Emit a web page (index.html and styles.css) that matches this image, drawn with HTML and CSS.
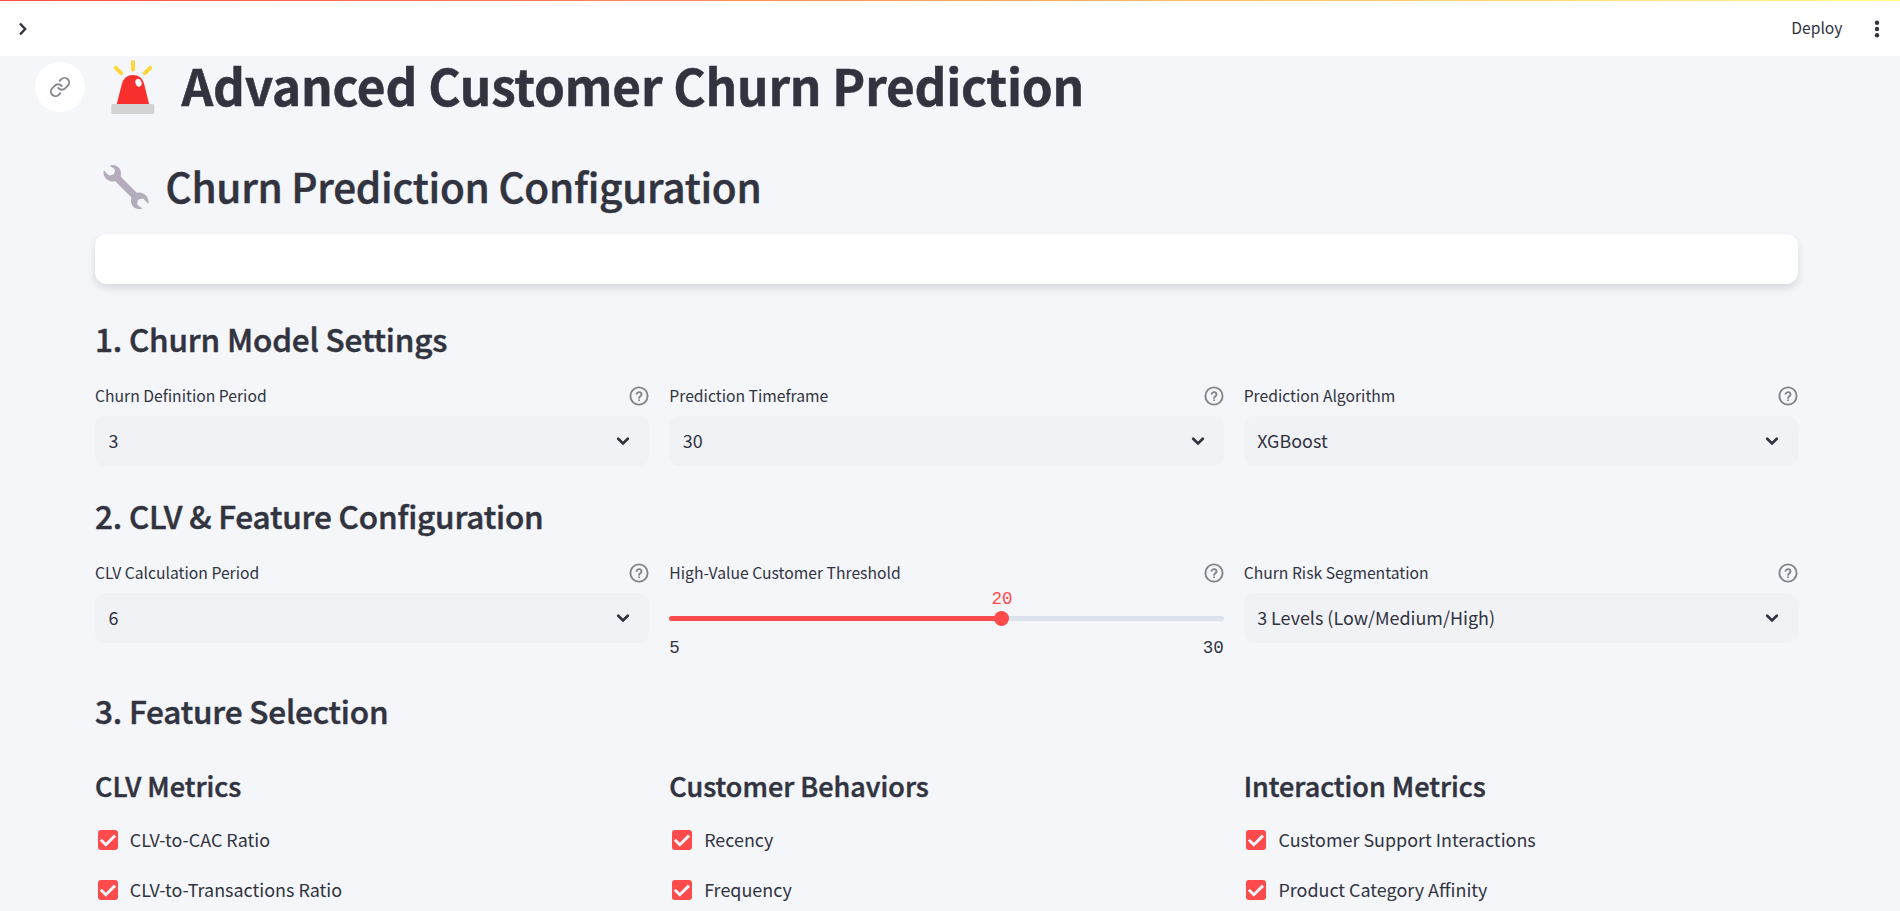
FILE: index.html
```html
<!DOCTYPE html>
<html lang="en">
<head>
<meta charset="utf-8">
<title>Advanced Customer Churn Prediction</title>
<link rel="stylesheet" href="styles.css">
</head>
<body>
<svg class="defs" width="0" height="0">
  <symbol id="help" viewBox="0 0 20 20"><g fill="none" stroke="currentColor" stroke-width="1.9" stroke-linecap="round" stroke-linejoin="round"><circle cx="10" cy="10" r="8.600"/><path d="M7.600 7.900a2.500 2.500 0 0 1 4.900.700c0 1.700-2.400 2.100-2.400 3.300"/><path d="M10.050 14.300h.01"/></g></symbol>
  <symbol id="down" viewBox="0 0 14 10"><path d="M2.200 2.700L7 7.400l4.800-4.700" fill="none" stroke="currentColor" stroke-width="2.700" stroke-linecap="round"/></symbol>
  <symbol id="check" viewBox="0 0 20 20"><path d="M2.800 9.800l5 4.900L17 5.600" fill="none" stroke="#f4f6fa" stroke-width="2.900"/></symbol>
</svg>
<header class="topbar">
  <svg class="expand" width="10" height="14" viewBox="0 0 10 14"><path d="M2 1.500L7.200 7 2 12.500" fill="none" stroke="currentColor" stroke-width="2.400"/></svg>
  <span class="deploy">Deploy</span>
  <svg class="menu" width="6" height="18" viewBox="0 0 6 18"><g fill="currentColor"><circle cx="3" cy="2.800" r="2.200"/><circle cx="3" cy="9" r="2.200"/><circle cx="3" cy="15.200" r="2.200"/></g></svg>
</header>
<main class="page">
  <h1 class="title">
    <a class="anchor"><svg width="22" height="22" viewBox="0 0 24 24" fill="none" stroke="currentColor" stroke-width="2" stroke-linecap="round" stroke-linejoin="round"><path d="M10 13a5 5 0 0 0 7.54.54l3-3a5 5 0 0 0-7.07-7.07l-1.72 1.71"/><path d="M14 11a5 5 0 0 0-7.54-.54l-3 3a5 5 0 0 0 7.07 7.07l1.71-1.71"/></svg></a>
    <svg class="siren" width="44" height="56" viewBox="0 0 44 56"><g stroke="#fdd73b" stroke-width="4" stroke-linecap="round"><path d="M22 3v7.500M4.800 8.800l5.400 5.400M39.200 8.800l-5.400 5.400"/></g><path d="M5.500 46L11 24.500Q13.500 16 22 16t11 8.500L38.300 46z" fill="#f8312f"/><ellipse cx="27.500" cy="23.800" rx="3" ry="4" transform="rotate(-18 27.500 23.800)" fill="#fff"/><rect x=".3" y="45" width="43" height="10" rx="1.800" fill="#d3d3d3"/></svg>
    <span class="title-text">Advanced Customer Churn Prediction</span>
  </h1>
  <h2 class="subtitle">
    <svg class="wrench" width="46" height="46" viewBox="0 0 46 46"><path d="M14 14l18 18" stroke="#b4acbc" stroke-width="7"/><g fill="#b4acbc"><path d="M6.500 1.600C11-.5 18.300 2.600 18 9.800c0 2-.6 3.500-1.700 4.800-2 2.300-5.500 3.700-9 2.400C2 15.500-.4 10.500.8 6.200l4.400 4.500q1 1 2.300.6l2.700-.8q.8-.3 1-1.100l.6-2.600q.3-1.200-.7-2z"/><path d="M39.500 44.400C35 46.500 27.700 43.400 28 36.200c0-2 .6-3.500 1.700-4.800 2-2.300 5.500-3.700 9-2.400 5.300 1.500 7.700 6.500 6.500 10.800l-4.400-4.500q-1-1-2.300-.6l-2.700.8q-.8.300-1 1.100l-.6 2.600q-.3 1.200.7 2z"/></g></svg>
    <span class="subtitle-text">Churn Prediction Configuration</span>
  </h2>
  <div class="card"></div>

  <h3 class="section">1. Churn Model Settings</h3>
  <div class="columns">
    <div class="field"><div class="label"><span>Churn Definition Period</span><svg class="help"><use href="#help"/></svg></div><div class="select"><span>3</span><svg class="down"><use href="#down"/></svg></div></div>
    <div class="field"><div class="label"><span>Prediction Timeframe</span><svg class="help"><use href="#help"/></svg></div><div class="select"><span>30</span><svg class="down"><use href="#down"/></svg></div></div>
    <div class="field"><div class="label"><span>Prediction Algorithm</span><svg class="help"><use href="#help"/></svg></div><div class="select"><span>XGBoost</span><svg class="down"><use href="#down"/></svg></div></div>
  </div>

  <h3 class="section second">2. CLV &amp; Feature Configuration</h3>
  <div class="columns">
    <div class="field"><div class="label"><span>CLV Calculation Period</span><svg class="help"><use href="#help"/></svg></div><div class="select"><span>6</span><svg class="down"><use href="#down"/></svg></div></div>
    <div class="field"><div class="label"><span>High-Value Customer Threshold</span><svg class="help"><use href="#help"/></svg></div>
      <div class="slider">
        <div class="track"><div class="thumb"><span class="value">20</span></div></div>
        <div class="ticks"><span>5</span><span>30</span></div>
      </div>
    </div>
    <div class="field"><div class="label"><span>Churn Risk Segmentation</span><svg class="help"><use href="#help"/></svg></div><div class="select"><span>3 Levels (Low/Medium/High)</span><svg class="down"><use href="#down"/></svg></div></div>
  </div>

  <h3 class="section third">3. Feature Selection</h3>
  <div class="columns features">
    <div><h4 class="group">CLV Metrics</h4>
      <label class="option"><svg class="box"><use href="#check"/></svg><span>CLV-to-CAC Ratio</span></label>
      <label class="option"><svg class="box"><use href="#check"/></svg><span>CLV-to-Transactions Ratio</span></label></div>
    <div><h4 class="group">Customer Behaviors</h4>
      <label class="option"><svg class="box"><use href="#check"/></svg><span>Recency</span></label>
      <label class="option"><svg class="box"><use href="#check"/></svg><span>Frequency</span></label></div>
    <div><h4 class="group">Interaction Metrics</h4>
      <label class="option"><svg class="box"><use href="#check"/></svg><span>Customer Support Interactions</span></label>
      <label class="option"><svg class="box"><use href="#check"/></svg><span>Product Category Affinity</span></label></div>
  </div>
</main>
</body>
</html>
```
FILE: styles.css
```css
* { box-sizing: border-box; }
body {
  margin: 0;
  height: 911px;
  overflow: hidden;
  background: #f4f6fa;
  color: #31333f;
  font-family: "Noto Sans CJK SC", "Noto Sans", sans-serif;
  font-size: 17.93px;
}
h1, h2, h3, h4 { margin: 0; font-weight: 500; white-space: nowrap; }
svg { display: block; flex: none; }
.defs { position: absolute; }
.topbar {
  height: 56px;
  padding: 1px 20px 0 18px;
  display: flex;
  align-items: center;
  background: linear-gradient(90deg, #ff4b4b, #fffd80) top / 100% 1px no-repeat, #fff;
}
.deploy { margin-left: auto; padding-bottom: 2px; font-size: 15.7px; line-height: 24px; }
.menu { margin-left: 31.5px; }
.page { width: 1798px; padding-left: 95px; }
.title {
  height: 57px;
  margin-left: -60px;
  display: flex;
  align-items: center;
  font-size: 49.5px;
  line-height: 57px;
  font-weight: 700;
  letter-spacing: -0.2px;
}
.title-text { -webkit-text-stroke: 0.5px currentColor; }
.anchor {
  width: 50px;
  height: 50px;
  margin-top: 5px;
  flex: none;
  display: flex;
  align-items: center;
  justify-content: center;
  border-radius: 50%;
  background: #fff;
  color: #84858c;
}
.siren { margin: 4px 26.5px 0 26px; }
.subtitle {
  height: 60px;
  margin-top: 42px;
  padding-left: 8px;
  display: flex;
  align-items: center;
  gap: 16.5px;
  font-size: 40.5px;
  line-height: 60px;
  letter-spacing: -0.26px;
}
.wrench { margin-top: 4px; }
.subtitle-text { padding-top: 2px; }
.subtitle-text, .section, .group { -webkit-text-stroke: 0.5px currentColor; }
.card {
  height: 50px;
  margin-top: 19px;
  border-radius: 12px;
  background: #fff;
  box-shadow: 0 4px 8px rgba(0, 0, 0, 0.12);
}
.section { margin-top: 33px; font-size: 31.5px; line-height: 42px; letter-spacing: -0.17px; }
.section.second { margin-top: 28px; }
.section.third { margin-top: 46px; }
.columns {
  display: grid;
  grid-template-columns: repeat(3, 1fr);
  column-gap: 20px;
  margin-top: 25px;
}
.field { height: 82px; }
.label {
  height: 24px;
  display: flex;
  justify-content: space-between;
  align-items: center;
  font-size: 15.7px;
  line-height: 24px;
}
.help { width: 20px; height: 20px; color: #84858c; }
.select {
  height: 50px;
  margin-top: 8px;
  padding: 0 19px 0 13.5px;
  display: flex;
  align-items: center;
  justify-content: space-between;
  border-radius: 10px;
  background: #f0f2f6;
}
.select span, .option span { padding-bottom: 2px; line-height: 26px; }
.down { width: 14px; height: 10px; }
.slider { padding-top: 31px; font-family: "Liberation Mono", monospace; font-size: 17.5px; }
.track {
  height: 5px;
  border-radius: 4px;
  background: linear-gradient(90deg, #ff4b4b 60%, #dce2ec 60%);
}
.thumb {
  position: relative;
  left: 60%;
  top: -5px;
  width: 15px;
  height: 15px;
  margin-left: -7.5px;
  border-radius: 50%;
  background: #ff4b4b;
}
.value { position: absolute; left: -3px; top: -24px; line-height: 24px; color: #ff4b4b; }
.ticks { display: flex; justify-content: space-between; margin-top: 15px; line-height: 24px; }
.features { margin-top: 36px; }
.group { padding-top: 1px; margin-bottom: 21px; font-size: 27px; line-height: 36px; }
.option {
  height: 30px;
  margin-bottom: 20px;
  padding-left: 2.8px;
  display: flex;
  align-items: center;
  gap: 12px;
}
.box { width: 20px; height: 20px; border-radius: 3px; background: #ff4b4b; }
```
